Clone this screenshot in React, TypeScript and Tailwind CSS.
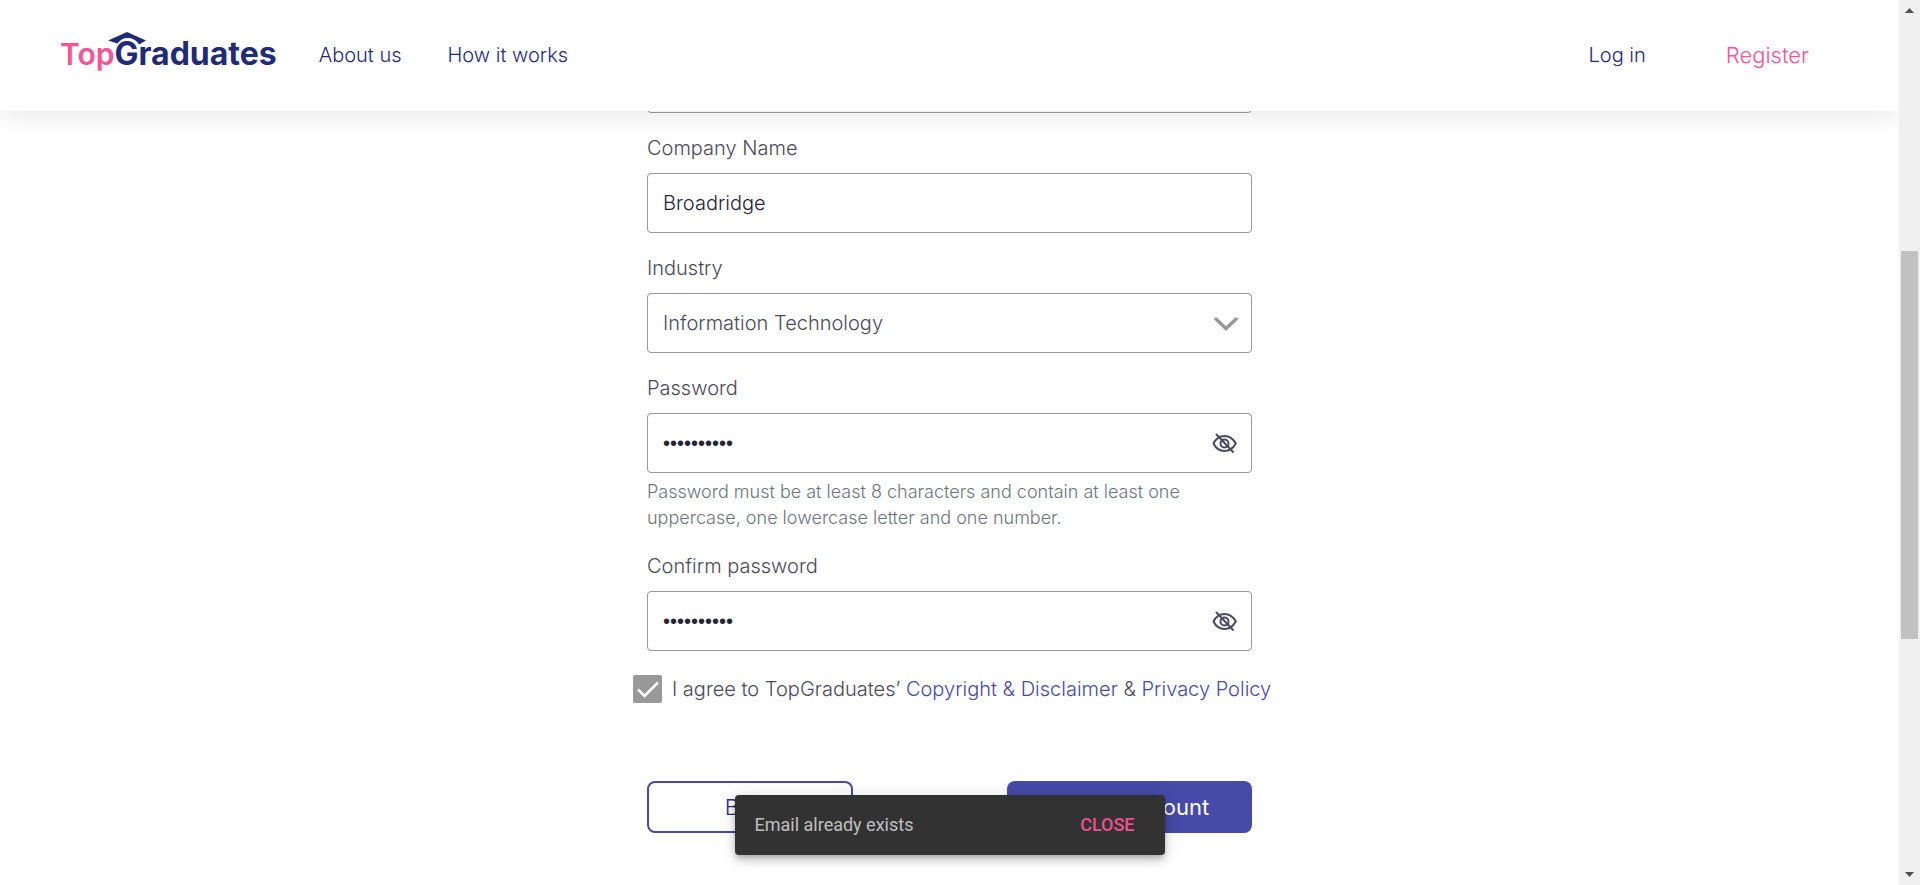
import { useState } from 'react';
import type { ReactNode } from 'react';

const inputClass =
  'block h-[60px] w-full rounded border border-[#999999] bg-white pl-[15px] pr-14 text-xl font-light outline-none';

function EyeOffIcon() {
  return (
    <svg viewBox="0 0 26 20" className="h-5 w-[26px]" fill="none" stroke="#4a4a5e" strokeWidth="2" aria-hidden="true">
      <path d="M1.500 10.500C4 5.500 8.200 3 12.500 3S21 5.500 23.800 10.500C21 15.500 17 18 12.500 18S4 15.500 1.500 10.500Z" />
      <circle cx="12.500" cy="10.500" r="4" />
      <path d="M4 1L21.500 19.500" />
    </svg>
  );
}

function Logo() {
  return (
    <a href="#" aria-label="TopGraduates" className="relative -mt-1 flex text-[32px] leading-10 font-bold text-[#1f2a78]">
      <span className="text-[30px] font-semibold text-[#fb5195]">Top</span>
      <span>Graduates</span>
      <svg viewBox="0 0 38 13" className="absolute -top-0.5 left-12 h-[13px] w-[38px]" aria-hidden="true">
        <path d="M19 0L38 8.500L31 12.500C28 7.500 24 6 19.500 6C15 6 12 8 9.500 11.500L0 8.500Z" fill="#1f2a78" />
      </svg>
    </a>
  );
}

function Field({ id, label, children }: { id: string; label: string; children: ReactNode }) {
  return (
    <div>
      <label htmlFor={id} className="mb-3 block text-xl leading-[26px] font-light text-[#4b4b57]">
        {label}
      </label>
      {children}
    </div>
  );
}

function PasswordInput({ id }: { id: string }) {
  const [visible, setVisible] = useState(false);
  return (
    <div className="relative">
      <input
        id={id}
        type={visible ? 'text' : 'password'}
        defaultValue="Password12"
        className={`${inputClass} font-['Liberation_Sans',sans-serif] text-[#252535]`}
      />
      <button
        type="button"
        aria-label="Toggle password visibility"
        onClick={() => setVisible(!visible)}
        className="absolute inset-y-0 right-3.5 flex items-center"
      >
        <EyeOffIcon />
      </button>
    </div>
  );
}

function Scrollbar() {
  return (
    <div className="flex w-[21px] shrink-0 flex-col items-center justify-between bg-[#f0f0f0] py-2" aria-hidden="true">
      <svg viewBox="0 0 9 5" className="h-[5px] w-[9px]">
        <path d="M0 5L4.500 0L9 5Z" fill="#505050" />
      </svg>
      <div className="flex w-[17px] flex-1 flex-col">
        <div className="grow-[238]" />
        <div className="grow-[388] bg-[#c1c1c1]" />
        <div className="grow-[233]" />
      </div>
      <svg viewBox="0 0 9 5" className="h-[5px] w-[9px]">
        <path d="M0 0L4.500 5L9 0Z" fill="#505050" />
      </svg>
    </div>
  );
}

export default function App() {
  const [toastOpen, setToastOpen] = useState(true);
  return (
    <div className="flex h-screen overflow-hidden bg-white font-['Inter',sans-serif]">
      <div className="relative flex min-w-0 flex-1 flex-col overflow-hidden">
        <header className="relative z-10 flex h-[111px] shrink-0 items-center bg-white pr-[90px] pl-[60px] shadow-[0_8px_24px_rgba(0,0,0,0.08)]">
          <Logo />
          <nav className="ml-[42px] flex flex-1 items-center text-xl font-light text-[#1f2a78]">
            <a href="#">About us</a>
            <a href="#" className="ml-[46px]">How it works</a>
            <a href="#" className="ml-auto">Log in</a>
            <a href="#" className="ml-20 text-[22px] text-[#fb5195]">Register</a>
          </nav>
        </header>

        <main className="-mt-[58px] shrink-0">
          <form className="mx-auto flex w-full max-w-[605px] flex-col gap-[22px]" onSubmit={(e) => e.preventDefault()}>
            <input aria-label="Email" type="email" className={inputClass} />
            <Field id="company" label="Company Name">
              <input id="company" type="text" defaultValue="Broadridge" className={`${inputClass} text-[#252535]`} />
            </Field>
            <Field id="industry" label="Industry">
              <div className="relative">
                <select id="industry" className={`${inputClass} appearance-none text-[#4b4b57]`}>
                  <option>Information Technology</option>
                </select>
                <svg
                  viewBox="0 0 24 14"
                  className="pointer-events-none absolute top-6 right-3.5 h-3.5 w-6"
                  fill="none"
                  stroke="#999999"
                  strokeWidth="3.500"
                  strokeLinecap="round"
                  aria-hidden="true"
                >
                  <path d="M2 2L12 11.500L22 2" />
                </svg>
              </div>
            </Field>
            <Field id="password" label="Password">
              <PasswordInput id="password" />
              <p className="mt-1.5 max-w-[560px] text-lg leading-[26px] font-light text-[#6c757d]">
                Password must be at least 8 characters and contain at least one uppercase, one lowercase letter and one
                number.
              </p>
            </Field>
            <Field id="confirm" label="Confirm password">
              <PasswordInput id="confirm" />
            </Field>

            <div className="-mx-3.5 mt-0.5 flex items-center gap-2.5 text-xl leading-7 font-light whitespace-nowrap text-[#4b4b57]">
              <span className="relative flex">
                <input
                  id="agree"
                  type="checkbox"
                  defaultChecked
                  className="h-7 w-[29px] appearance-none rounded-xs bg-[#999999]"
                />
                <svg
                  viewBox="0 0 29 28"
                  className="pointer-events-none absolute inset-0 h-7 w-[29px]"
                  fill="none"
                  stroke="#ffffff"
                  strokeWidth="2.500"
                  aria-hidden="true"
                >
                  <path d="M5 14.500L11.500 21L25 7.500" />
                </svg>
              </span>
              <label htmlFor="agree">
                I agree to TopGraduates’{' '}
                <a href="#" className="text-[#464aa8]">Copyright &amp; Disclaimer</a> &amp;{' '}
                <a href="#" className="text-[#464aa8]">Privacy Policy</a>
              </label>
            </div>

            <div className="mt-14 flex justify-between text-[22px]">
              <button type="button" className="h-[52px] w-[206px] rounded-lg border-2 border-[#464aa8] font-light text-[#2b2f86]">
                Back
              </button>
              <button type="submit" className="h-[52px] w-[245px] rounded-lg bg-[#464aa8] text-white">
                Create account
              </button>
            </div>
          </form>
        </main>

        {toastOpen && (
          <div
            role="alert"
            className="absolute bottom-[30px] left-1/2 z-20 flex h-[60px] w-[430px] -translate-x-1/2 items-center justify-between rounded bg-[#323232] pr-[30px] pl-5 font-['Roboto',sans-serif] text-lg text-white/70 shadow-[0_3px_5px_-1px_rgba(0,0,0,0.2),0_6px_10px_rgba(0,0,0,0.14),0_1px_18px_rgba(0,0,0,0.12)]"
          >
            <span>Email already exists</span>
            <button type="button" onClick={() => setToastOpen(false)} className="font-medium text-[#f0508f]">
              CLOSE
            </button>
          </div>
        )}
      </div>
      <Scrollbar />
    </div>
  );
}
